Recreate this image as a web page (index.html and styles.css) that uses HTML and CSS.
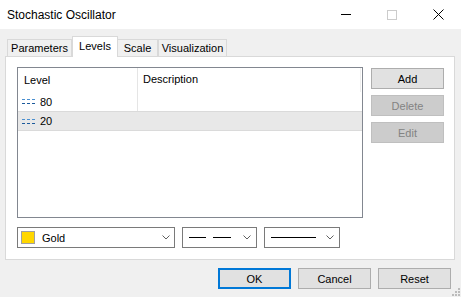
FILE: index.html
```html
<!DOCTYPE html>
<html lang="en">
<head>
    <meta charset="UTF-8">
    <meta name="viewport" content="width=device-width, initial-scale=1.0">
    <title>Stochastic Oscillator</title>
    <link rel="stylesheet" href="styles.css">
</head>
<body>
    <div class="titlebar">
        <span class="title">Stochastic Oscillator</span>
        <div class="caption">
            <span class="cap">
                <svg width="10" height="10" viewBox="0 0 10 10"><line x1="0" y1="4.5" x2="11" y2="4.5" stroke="#000" stroke-width="1"/></svg>
            </span>
            <span class="cap">
                <svg width="10" height="10" viewBox="0 0 10 10"><rect x="0.5" y="0.5" width="9" height="9" fill="none" stroke="#cccccc" stroke-width="1"/></svg>
            </span>
            <span class="cap">
                <svg width="11" height="11" viewBox="0 0 11 11"><path d="M0.5 0.5 L10.5 10.5 M10.5 0.5 L0.5 10.5" stroke="#000" stroke-width="1"/></svg>
            </span>
        </div>
    </div>

    <div class="tabs">
        <div class="tab tab-params">Parameters</div>
        <div class="tab tab-levels active">Levels</div>
        <div class="tab tab-scale">Scale</div>
        <div class="tab tab-visual">Visualization</div>
    </div>

    <div class="panel">
        <div class="levels">
            <div class="list">
                <div class="list-head">
                    <div class="col col-level">Level</div>
                    <div class="col col-desc">Description</div>
                </div>
                <div class="row">
                    <div class="col col-level">
                        <svg class="level-icon" width="14" height="5" viewBox="0 0 14 5">
                            <path d="M0 0.5h3M5 0.5h3M10 0.5h3" stroke="#4a8fd0" stroke-width="1"/>
                            <path d="M0 4.5h3M5 4.5h3M10 4.5h3" stroke="#1c5a9c" stroke-width="1"/>
                        </svg>80
                    </div>
                    <div class="col col-desc"></div>
                </div>
                <div class="row selected">
                    <div class="col col-level">
                        <svg class="level-icon" width="14" height="5" viewBox="0 0 14 5">
                            <path d="M0 0.5h3M5 0.5h3M10 0.5h3" stroke="#4a8fd0" stroke-width="1"/>
                            <path d="M0 4.5h3M5 4.5h3M10 4.5h3" stroke="#1c5a9c" stroke-width="1"/>
                        </svg>20
                    </div>
                    <div class="col col-desc"></div>
                </div>
            </div>
            <div class="side-buttons">
                <button class="btn">Add</button>
                <button class="btn" disabled>Delete</button>
                <button class="btn" disabled>Edit</button>
            </div>
        </div>

        <div class="combos">
            <div class="combo combo-color">
                <span class="swatch"></span>
                <span class="combo-text">Gold</span>
                <svg class="chevron" width="8" height="5" viewBox="0 0 8 5"><polyline points="0.5,0.5 4,4 7.5,0.5" fill="none" stroke="#606060" stroke-width="1"/></svg>
            </div>
            <div class="combo combo-style">
                <svg width="43" height="3" viewBox="0 0 43 3"><path d="M0 1.5h17M24 1.5h18" stroke="#000" stroke-width="1"/></svg>
                <svg class="chevron" width="8" height="5" viewBox="0 0 8 5"><polyline points="0.5,0.5 4,4 7.5,0.5" fill="none" stroke="#606060" stroke-width="1"/></svg>
            </div>
            <div class="combo combo-width">
                <svg width="45" height="3" viewBox="0 0 45 3"><path d="M0 1.5h45" stroke="#000" stroke-width="1"/></svg>
                <svg class="chevron" width="8" height="5" viewBox="0 0 8 5"><polyline points="0.5,0.5 4,4 7.5,0.5" fill="none" stroke="#606060" stroke-width="1"/></svg>
            </div>
        </div>
    </div>

    <div class="footer">
        <button class="btn default">OK</button>
        <button class="btn">Cancel</button>
        <button class="btn">Reset</button>
    </div>

    <svg class="grip" width="12" height="12" viewBox="0 0 12 12">
        <rect x="9" y="3" width="2" height="2" fill="#bcbcbc"/>
        <rect x="6" y="6" width="2" height="2" fill="#bcbcbc"/>
        <rect x="9" y="6" width="2" height="2" fill="#bcbcbc"/>
        <rect x="3" y="9" width="2" height="2" fill="#bcbcbc"/>
        <rect x="6" y="9" width="2" height="2" fill="#bcbcbc"/>
        <rect x="9" y="9" width="2" height="2" fill="#bcbcbc"/>
    </svg>
</body>
</html>
```

FILE: styles.css
```css
* {
    box-sizing: border-box;
}
body {
    margin: 0;
    width: 461px;
    height: 297px;
    position: relative;
    overflow: hidden;
    background-color: #f0f0f0;
    font-family: "Liberation Sans", Arial, sans-serif;
    font-size: 11px;
    color: #000;
}

/* title bar */
.titlebar {
    display: flex;
    align-items: center;
    height: 29px;
    background-color: #fff;
}
.title {
    flex: 1;
    padding-left: 7px;
    font-size: 12px;
}
.caption {
    display: flex;
    height: 29px;
}
.cap {
    width: 46px;
    display: flex;
    align-items: center;
    justify-content: center;
}

/* tabs */
.tabs {
    display: flex;
    align-items: flex-end;
    height: 27px;
    padding-left: 7px;
}
.tab {
    height: 17px;
    line-height: 16px;
    text-align: center;
    border: 1px solid #d9d9d9;
    border-bottom: none;
    background-color: #f0f0f0;
}
.tab.active {
    height: 21px;
    line-height: 19px;
    margin-bottom: -1px;
    position: relative;
    z-index: 1;
    background-color: #fff;
}
.tab-params {
    width: 65px;
}
.tab-levels {
    width: 46px;
}
.tab-scale {
    width: 40px;
    border-left: none;
}
.tab-visual {
    width: 69px;
}

/* panel */
.panel {
    margin-left: 5px;
    width: 450px;
    height: 204px;
    padding: 10px 10px 11px 11px;
    border: 1px solid #d9d9d9;
    background-color: #fff;
}
.levels {
    display: flex;
    gap: 8px;
}
.list {
    width: 346px;
    height: 151px;
    border: 1px solid #828790;
}
.list-head,
.row {
    display: flex;
}
.list-head {
    height: 24px;
    line-height: 23px;
}
.row {
    height: 19px;
    line-height: 18px;
}
.row.selected {
    height: 20px;
    background-color: #e8e8e8;
    border-top: 1px solid #dadada;
    border-bottom: 1px solid #dadada;
}
.col-level {
    width: 120px;
    padding-left: 5px;
    border-right: 1px solid #e5e5e5;
    display: flex;
    align-items: center;
}
.list-head .col-level {
    padding-left: 6px;
}
.row.selected .col-level {
    border-right-color: transparent;
}
.col-desc {
    flex: 1;
    padding-left: 5px;
}
.list-head .col-desc {
    border-right: 1px solid #eeeeee;
    margin-right: 1px;
}
.level-icon {
    margin-right: 4px;
    margin-left: -1px;
}

/* buttons */
.side-buttons {
    display: flex;
    flex-direction: column;
    gap: 6px;
    margin-top: 1px;
}
.btn {
    width: 73px;
    height: 21px;
    padding: 0;
    font-family: inherit;
    font-size: 11px;
    color: #000;
    background-color: #e1e1e1;
    border: 1px solid #adadad;
}
.btn:disabled {
    color: #838383;
    background-color: #cccccc;
    border-color: #bfbfbf;
}
.btn.default {
    border: 2px solid #0078d7;
}

/* combos */
.combos {
    display: flex;
    gap: 7px;
    margin-top: 9px;
}
.combo {
    height: 21px;
    display: flex;
    align-items: center;
    border: 1px solid #7a7a7a;
    background-color: #fff;
}
.combo-color {
    width: 158px;
    padding: 0 4px 0 3px;
}
.combo-style {
    width: 75px;
    padding: 0 5px 0 6px;
}
.combo-width {
    width: 76px;
    padding: 0 5px 0 6px;
}
.chevron {
    margin-left: auto;
}
.swatch {
    width: 14px;
    height: 13px;
    background-color: #ffd700;
    border: 1px solid #a0a0a0;
}
.combo-text {
    margin-left: 7px;
}

/* footer */
.footer {
    display: flex;
    justify-content: flex-end;
    gap: 7px;
    margin-top: 8px;
    padding-right: 10px;
}

.grip {
    position: absolute;
    right: 0;
    bottom: 0;
}
```
